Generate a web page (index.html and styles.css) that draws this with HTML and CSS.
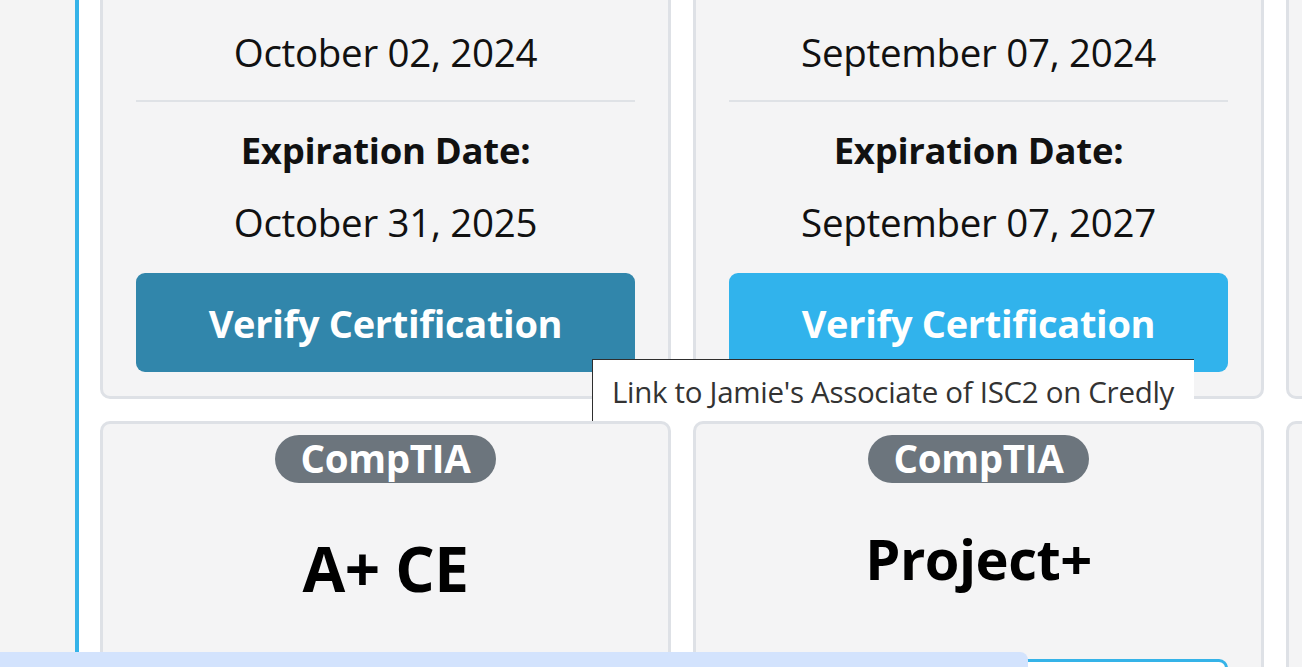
FILE: index.html
```html
<!DOCTYPE html>
<html lang="en">
<head>
<meta charset="utf-8">
<title>Certifications</title>
<link rel="stylesheet" href="styles.css">
</head>
<body>
<div class="page">
  <aside class="side"></aside>
  <main class="content">
    <div class="grid">
      <section class="card top-card">
        <p class="date">October 02, 2024</p>
        <hr class="sep">
        <p class="label">Expiration Date:</p>
        <p class="date">October 31, 2025</p>
        <a class="btn btn-hover" href="#">Verify Certification</a>
      </section>
      <section class="card top-card">
        <p class="date">September 07, 2024</p>
        <hr class="sep">
        <p class="label">Expiration Date:</p>
        <p class="date">September 07, 2027</p>
        <a class="btn" href="#">Verify Certification</a>
      </section>
      <section class="card top-card card-offscreen"></section>

      <section class="card bottom-card">
        <span class="pill">CompTIA</span>
        <h2 class="title title-lg">A+ CE</h2>
        <a class="btn btn-outline" href="#">Verify Certification</a>
      </section>
      <section class="card bottom-card">
        <span class="pill">CompTIA</span>
        <h2 class="title title-md">Project+</h2>
        <a class="btn btn-outline" href="#">Verify Certification</a>
      </section>
      <section class="card bottom-card card-offscreen"></section>
    </div>
  </main>
</div>

<div class="tooltip">Link to Jamie's Associate of ISC2 on Credly</div>
<div class="status-bar"></div>
</body>
</html>
```

FILE: styles.css
```css
html, body {
  margin: 0;
  padding: 0;
  overflow: hidden;
  height: 100%;
}

body {
  background: #f4f4f4;
  font-family: "Open Sans", "Noto Sans", sans-serif;
  color: #111;
}

.page {
  display: flex;
  min-height: 100%;
}

.side {
  width: 75px;
  flex: 0 0 75px;
  background: #f4f4f4;
}

.content {
  flex: 1 0 auto;
  background: #fff;
  border-left: 4px solid #35b3e8;
  padding-left: 21px;
}

.grid {
  display: grid;
  grid-template-columns: repeat(3, 571px);
  column-gap: 22px;
  row-gap: 22px;
  margin-top: -10px;
}

.card {
  box-sizing: border-box;
  background: #f4f4f5;
  border: 3px solid #dee1e6;
  border-radius: 10px;
  display: flex;
  flex-direction: column;
  align-items: stretch;
  text-align: center;
}

.card-offscreen {
  min-height: 300px;
}

.top-card {
  padding: 35px 31px 24px;
}

.date,
.label {
  margin: 0;
  font-size: 38.5px;
  line-height: 48px;
  letter-spacing: -0.3px;
  white-space: nowrap;
}

.label {
  font-weight: 700;
  font-size: 36.5px;
  margin-top: 24px;
}

.label + .date {
  margin-top: 24px;
}

.sep {
  margin: 24px 2px 0;
  border: 0;
  height: 2px;
  background: #dfe2e6;
}

.btn {
  display: flex;
  align-items: center;
  justify-content: center;
  box-sizing: border-box;
  height: 99px;
  margin: 27px 2px 0;
  border-radius: 9px;
  background: #31b3ec;
  color: #fff;
  font-weight: 700;
  font-size: 38px;
  letter-spacing: -0.3px;
  text-decoration: none;
  white-space: nowrap;
}

.btn-hover {
  background: #3186ab;
}

.bottom-card {
  padding: 11px 31px 24px;
  align-items: center;
}

.pill {
  box-sizing: border-box;
  height: 48px;
  line-height: 46px;
  padding: 0 25px;
  border-radius: 24px;
  background: #6c757d;
  color: #fff;
  font-weight: 700;
  font-size: 38.5px;
  letter-spacing: -0.3px;
}

.title {
  margin: 0;
  font-weight: 700;
  color: #000;
  letter-spacing: -0.5px;
  line-height: 80px;
}

.title-lg {
  font-size: 62px;
  margin-top: 45px;
  margin-bottom: 51px;
}

.title-md {
  font-size: 56px;
  margin-top: 35px;
  margin-bottom: 61px;
}

.bottom-card .btn {
  align-self: stretch;
  margin-top: 0;
}

.btn-outline {
  background: #fff;
  border: 3px solid #35b3e8;
  color: #35b3e8;
}

.tooltip {
  position: absolute;
  left: 592px;
  top: 359px;
  width: 602px;
  height: 62px;
  box-sizing: border-box;
  background: #fff;
  border-top: 1px solid #2e2e2e;
  border-left: 1px solid #2e2e2e;
  padding-left: 19px;
  font-size: 29.5px;
  line-height: 64px;
  color: #333;
  letter-spacing: -0.3px;
  white-space: nowrap;
}

.status-bar {
  position: fixed;
  left: 0;
  bottom: 0;
  width: 1028px;
  height: 15px;
  background: #d3e3fd;
  border-top-right-radius: 8px;
}
```
